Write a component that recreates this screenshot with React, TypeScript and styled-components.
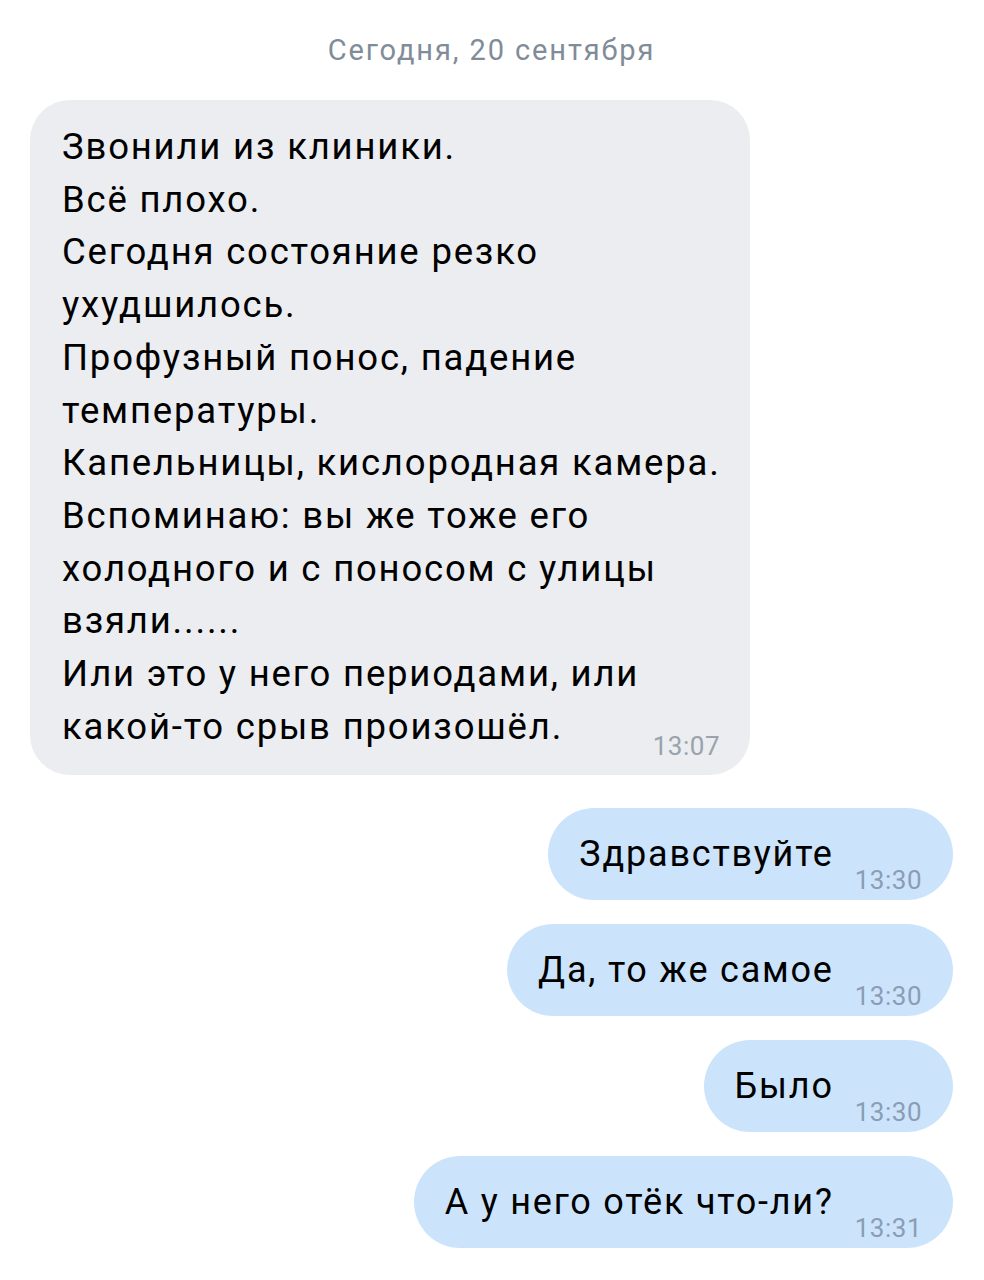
import React from 'react';
import styled, { createGlobalStyle } from 'styled-components';

const GlobalStyle = createGlobalStyle`
  html, body {
    margin: 0;
    padding: 0;
    background: #ffffff;
  }
  body {
    font-family: Roboto, "Noto Sans", Arial, sans-serif;
    -webkit-font-smoothing: antialiased;
  }
`;

// весь чат
const Chat = styled.div`
  width: 984px;
  box-sizing: border-box;
  padding: 30px 31px 32px 30px;
  display: flex;
  flex-direction: column;
`;

// дата
const DateLabel = styled.div`
  text-align: center;
  font-size: 29px;
  line-height: 40px;
  letter-spacing: 1.9px;
  color: #818c99;
  margin-bottom: 30px;
`;

// входящее сообщение
const InBubble = styled.div`
  align-self: flex-start;
  width: 720px;
  box-sizing: border-box;
  padding: 21px 30px 22px 32px;
  background: #ebedf0;
  border-radius: 40px;
  margin-bottom: 33px;
`;

const Line = styled.div`
  font-size: 36.5px;
  line-height: 52.7px;
  letter-spacing: 1.8px;
  color: #000000;
  white-space: nowrap;
`;

const LastLine = styled.div`
  display: flex;
  justify-content: space-between;
  align-items: flex-start;
`;

// время
const Time = styled.span<{ $drop: number; $lh: number; $color: string }>`
  font-size: 26px;
  line-height: 30px;
  letter-spacing: 0.5px;
  color: ${p => p.$color};
  margin-top: ${p => p.$drop}px;
  margin-bottom: ${p => p.$lh - p.$drop - 30}px;
  flex-shrink: 0;
`;

// исходящие
const OutList = styled.div`
  display: flex;
  flex-direction: column;
  align-items: flex-end;
  gap: 24px;
`;

const OutBubble = styled.div`
  display: flex;
  align-items: flex-start;
  gap: 21px;
  padding: 24px 31px 24px 31px;
  background: #cce4fb;
  border-radius: 46px;
`;

const OutText = styled.span`
  font-size: 36px;
  line-height: 44px;
  letter-spacing: 1.8px;
  color: #000000;
  white-space: nowrap;
`;

const incoming = [
  'Звонили из клиники.',
  'Всё плохо.',
  'Сегодня состояние резко',
  'ухудшилось.',
  'Профузный понос, падение',
  'температуры.',
  'Капельницы, кислородная камера.',
  'Вспоминаю: вы же тоже его',
  'холодного и с поносом с улицы',
  'взяли......',
  'Или это у него периодами, или',
];

const outgoing = [
  { text: 'Здравствуйте', time: '13:30' },
  { text: 'Да, то же самое', time: '13:30' },
  { text: 'Было', time: '13:30' },
  { text: 'А у него отёк что-ли?', time: '13:31' },
];

export default function App() {
  return (
    <>
      <GlobalStyle />
      <Chat>
        <DateLabel>Сегодня, 20 сентября</DateLabel>
        <InBubble>
          {incoming.map((l, i) => (
            <Line key={i}>{l}</Line>
          ))}
          <LastLine>
            <Line>какой-то срыв произошёл.</Line>
            <Time $drop={30} $lh={52.7} $color="#99a2ad">13:07</Time>
          </LastLine>
        </InBubble>
        <OutList>
          {outgoing.map((m, i) => (
            <OutBubble key={i}>
              <OutText>{m.text}</OutText>
              <Time $drop={33} $lh={44} $color="#8a9db5">{m.time}</Time>
            </OutBubble>
          ))}
        </OutList>
      </Chat>
    </>
  );
}
